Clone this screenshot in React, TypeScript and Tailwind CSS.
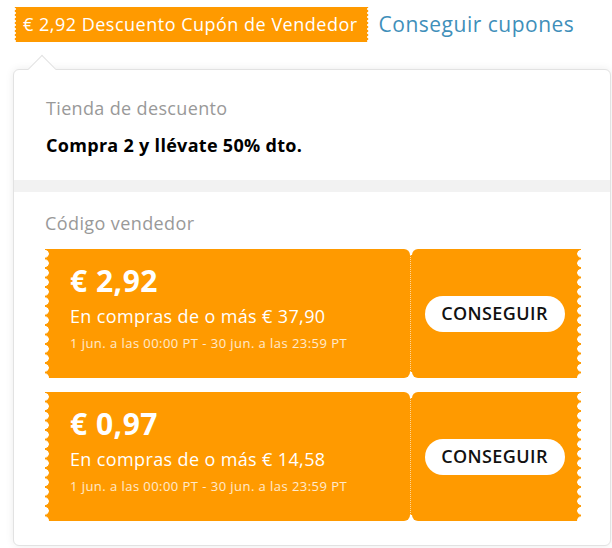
import React from 'react';

const coupons = [
    { id: 1, amount: '€ 2,92', min: 'En compras de o más € 37,90', dates: '1 jun. a las 00:00 PT - 30 jun. a las 23:59 PT' },
    { id: 2, amount: '€ 0,97', min: 'En compras de o más € 14,58', dates: '1 jun. a las 00:00 PT - 30 jun. a las 23:59 PT' }
];

const Coupon: React.FC<{ amount: string; min: string; dates: string }> = ({ amount, min, dates }) => (
    <div className="flex h-[129px]">
        {/* left scalloped edge */}
        <div className="w-[4px] bg-[radial-gradient(circle_at_0_50%,#fff_3.5px,#ff9a00_4px)] bg-[length:4px_9.5px]" />
        <div className="flex-1 bg-[#ff9a00] rounded-r-[6px] pl-[21px] pt-[13px] text-white">
            <div className="text-[30px] leading-[37px] font-bold tracking-[0.5px]">{amount}</div>
            <div className="mt-[5px] text-[18px] leading-[25px] tracking-[0.37px]">{min}</div>
            <div className="mt-[5px] text-[13px] leading-[18px] tracking-[0.45px] text-white/80">{dates}</div>
        </div>
        {/* seam */}
        <div className="w-[2px] flex flex-col py-[6px]">
            <div className="flex-1 bg-[#ff9a00] border-l border-dotted border-white/60" />
        </div>
        <div className="w-[165px] bg-[#ff9a00] rounded-l-[6px] flex items-center justify-center">
            <button className="w-[140px] h-[36px] rounded-full bg-white text-[18px] font-semibold text-[#111] tracking-[0.4px]">
                CONSEGUIR
            </button>
        </div>
        {/* right scalloped edge */}
        <div className="w-[4px] bg-[radial-gradient(circle_at_100%_50%,#fff_3.5px,#ff9a00_4px)] bg-[length:4px_9.5px]" />
    </div>
);

const App: React.FC = () => {
    return (
        <div className="w-[612px] h-[548px] bg-white overflow-hidden font-['Open_Sans',sans-serif]">
            {/* Header */}
            <div className="flex items-center pt-[7px] pl-[14px]">
                <div className="flex h-[35px]">
                    <div className="w-[2px] bg-[radial-gradient(circle_at_0_50%,#fff_1.5px,#ff9a00_2px)] bg-[length:2px_4px]" />
                    <div className="bg-[#ff9a00] flex items-center pl-[7px] pr-[9px] text-white text-[18px] tracking-[0.5px] whitespace-nowrap">
                        € 2,92 Descuento Cupón de Vendedor
                    </div>
                    <div className="w-[2px] bg-[radial-gradient(circle_at_100%_50%,#fff_1.5px,#ff9a00_2px)] bg-[length:2px_4px]" />
                </div>
                <a className="ml-[10px] text-[21px] tracking-[0.5px] text-[#3f8fba] whitespace-nowrap">Conseguir cupones</a>
            </div>

            {/* Popover */}
            <div className="relative mt-[27px] ml-[13px] w-[598px] bg-white border border-[#e2e2e2] rounded-[6px] shadow-[0_0_8px_rgba(0,0,0,0.08)] pb-[24px]">
                <div className="absolute left-[18px] top-[-11px] w-[20px] h-[20px] rotate-45 bg-white border-t border-l border-[#e2e2e2]" />

                <div className="relative px-[32px] pt-[26px] pb-[23px]">
                    <div className="text-[18px] leading-[24px] tracking-[0.35px] text-[#999]">Tienda de descuento</div>
                    <div className="mt-[13px] text-[18px] leading-[24px] tracking-[0.3px] font-bold text-black">Compra 2 y llévate 50% dto.</div>
                </div>

                <div className="h-[12px] bg-[#f2f2f2]" />

                <div className="pl-[31px] pr-[29px] pt-[19px]">
                    <div className="text-[18px] leading-[24px] tracking-[0.4px] text-[#999]">Código vendedor</div>
                    <div className="mt-[14px] flex flex-col gap-[14px]">
                        {coupons.map((c) => (
                            <Coupon key={c.id} amount={c.amount} min={c.min} dates={c.dates} />
                        ))}
                    </div>
                </div>
            </div>
        </div>
    );
};

export default App;
